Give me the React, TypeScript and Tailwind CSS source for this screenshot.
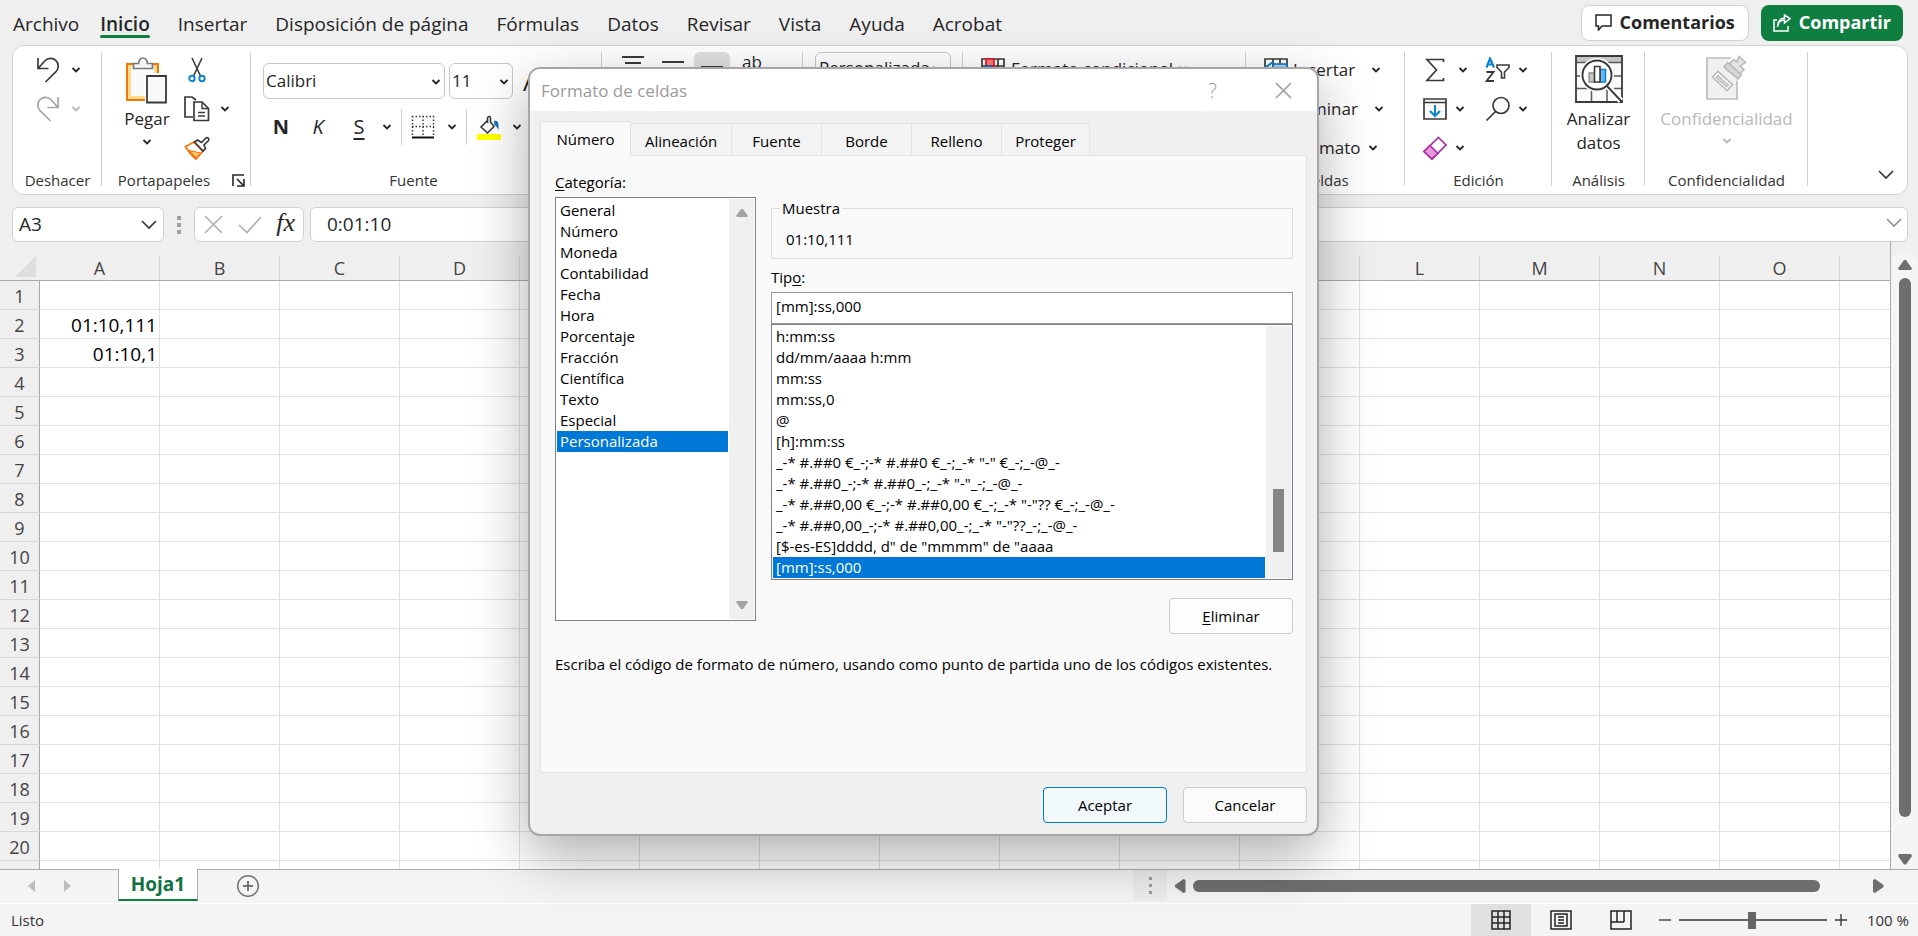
import type { ReactNode } from "react";

const MENU = [
  "Archivo",
  "Inicio",
  "Insertar",
  "Disposición de página",
  "Fórmulas",
  "Datos",
  "Revisar",
  "Vista",
  "Ayuda",
  "Acrobat",
];

const COLUMNS = ["A", "B", "C", "D", "E", "F", "G", "H", "I", "J", "K", "L", "M", "N", "O"];
const ROWS = Array.from({ length: 20 }, (_, i) => i + 1);
const CELLS: Record<string, string> = { A2: "01:10,111", A3: "01:10,1" };

const DIALOG_TABS = ["Alineación", "Fuente", "Borde", "Relleno", "Proteger"];

const CATEGORIES = [
  "General",
  "Número",
  "Moneda",
  "Contabilidad",
  "Fecha",
  "Hora",
  "Porcentaje",
  "Fracción",
  "Científica",
  "Texto",
  "Especial",
  "Personalizada",
];

const FORMATS = [
  "h:mm:ss",
  "dd/mm/aaaa h:mm",
  "mm:ss",
  "mm:ss,0",
  "@",
  "[h]:mm:ss",
  '_-* #.##0 €_-;-* #.##0 €_-;_-* "-" €_-;_-@_-',
  '_-* #.##0_-;-* #.##0_-;_-* "-"_-;_-@_-',
  '_-* #.##0,00 €_-;-* #.##0,00 €_-;_-* "-"?? €_-;_-@_-',
  '_-* #.##0,00_-;-* #.##0,00_-;_-* "-"??_-;_-@_-',
  '[$-es-ES]dddd, d" de "mmmm" de "aaaa',
  "[mm]:ss,000",
];

function Chevron({ className = "text-[#262626]" }: { className?: string }) {
  return (
    <svg className={`shrink-0 ${className}`} width="10" height="8" viewBox="0 0 10 8" fill="none" stroke="currentColor" strokeWidth="1.8">
      <path d="M1.500 2L5 5.500 8.500 2" />
    </svg>
  );
}

function WideChevron({ className = "text-[#333]" }: { className?: string }) {
  return (
    <svg className={`shrink-0 ${className}`} width="16" height="10" viewBox="0 0 16 10" fill="none" stroke="currentColor" strokeWidth="1.6">
      <path d="M1 1l7 7 7-7" />
    </svg>
  );
}

function UndoIcon() {
  return (
    <svg width="24" height="26" viewBox="0 0 24 26" fill="none" stroke="currentColor" strokeWidth="1.7">
      <path d="M2 1v10.500h10.500M2.500 11L9 3.800C12 .6 17 .6 20 3.600s3 8 0 11L9.500 25" />
    </svg>
  );
}

function RedoIcon() {
  return (
    <svg width="24" height="26" viewBox="0 0 24 26" fill="none" stroke="currentColor" strokeWidth="1.700">
      <path d="M22 1v10.500H11.500M21.500 11L15 3.800C12 .6 7 .6 4 3.600s-3 8 0 11L14.500 25" />
    </svg>
  );
}

function PasteIcon() {
  return (
    <svg width="42" height="48" viewBox="0 0 42 48" fill="none">
      <path d="M1 8h31v36H1z" fill="#ffd98a" stroke="#f7760a" strokeWidth="2" />
      <path d="M5 10h23v30H5z" fill="#fafafa" />
      <path d="M7.500 12.500V7.500h5C13 4 14.500 2 17 2s4 2 4.500 5.500h5v5z" fill="#f6f6f6" stroke="#7a7a7a" strokeWidth="1.700" />
      <path d="M19 17h22v30H19z" fill="#fff" />
      <path d="M21 20h19v26.500H21z" fill="#fafafa" stroke="#3b3a39" strokeWidth="1.800" />
    </svg>
  );
}

function CutIcon() {
  return (
    <svg width="18" height="26" viewBox="0 0 18 26" fill="none">
      <path d="M4 1l8.500 18M14 1L5.500 19" stroke="#3b3a39" strokeWidth="1.600" />
      <circle cx="4" cy="21.500" r="2.700" stroke="#0a84d0" strokeWidth="1.900" />
      <circle cx="14" cy="21.500" r="2.700" stroke="#0a84d0" strokeWidth="1.900" />
    </svg>
  );
}

function CopyIcon() {
  return (
    <svg width="26" height="26" viewBox="0 0 26 26" fill="#fff" stroke="#3b3a39" strokeWidth="1.700">
      <path d="M9 21H1V1h7l4 3" />
      <path d="M10 6h8l6.500 6.500V24.500H10z" />
      <path d="M18 6v6.500h6.500M14 16.500h7M14 20h7" fill="none" strokeWidth="1.400" />
    </svg>
  );
}

function BrushIcon() {
  return (
    <svg width="26" height="24" viewBox="0 0 26 24" fill="none">
      <path d="M10 6L1.500 10.500c3 5 6 9 10.500 12.500l7-8z" fill="#fff" stroke="#f7760a" strokeWidth="1.800" />
      <path d="M5 14.500l12 2.500-5 5.500z" fill="#ffc46b" stroke="#f7760a" strokeWidth="1.200" />
      <path d="M10.500 6l3-2 4 2.500L22 2c1.500-1 3.500.5 2.500 2.500L20 9l1.500 3.500-2.500 2.500z" fill="#fff" stroke="#3b3a39" strokeWidth="1.700" />
    </svg>
  );
}

function LauncherIcon() {
  return (
    <svg width="13" height="13" viewBox="0 0 13 13" fill="none" stroke="#262626" strokeWidth="1.600">
      <path d="M1 12V1h11M5 5l6 6M12 5v7H5" />
    </svg>
  );
}

function BordersIcon() {
  return (
    <svg width="24" height="24" viewBox="0 0 24 24" fill="none" stroke="#3b3a39">
      <path d="M1 1.500h22M1 11.500h22M1.500 1v20M12 1v20M22.500 1v20" strokeWidth="1.500" strokeDasharray="1.500 2" />
      <path d="M1 22.500h22" stroke="#111" strokeWidth="2" />
    </svg>
  );
}

function FillIcon() {
  return (
    <svg width="24" height="26" viewBox="0 0 24 26" fill="none">
      <path d="M17 7c4-1 5 2 4.500 9-1.500-3-2.500-4-4-5z" fill="#0a6fc2" />
      <path d="M10.500 6.500L4 13l6.500 6L17 12.500 13.500 8V4c0-2-2.500-2-3 0v5" fill="#fff" stroke="#3b3a39" strokeWidth="1.600" />
      <path d="M0 20h24v6H0z" fill="#ffff00" />
    </svg>
  );
}

function AlignLines({ offset }: { offset: number }) {
  return (
    <svg width="22" height="26" viewBox="0 0 22 26" fill="none" stroke="#3b3a39" strokeWidth="1.800">
      <path d={`M0 ${offset}h22M3 ${offset + 6}h16M0 ${offset + 12}h22`} />
    </svg>
  );
}

function CondFormatIcon() {
  return (
    <svg width="24" height="24" viewBox="0 0 24 24" fill="#fff" stroke="#3b3a39" strokeWidth="1.700">
      <path d="M1 1h22v22H1zM1 8h22M1 15h22M17 1v22" />
      <path d="M5 1h8v7H5z" fill="#ff7a70" stroke="#e81123" />
      <path d="M5 8h5v7H5z" fill="#4aa3e0" stroke="#0a6fc2" />
    </svg>
  );
}

function InsertCellsIcon() {
  return (
    <svg width="24" height="24" viewBox="0 0 24 24" fill="#fff" stroke="#3b3a39" strokeWidth="1.700">
      <path d="M1 1h22v22H1zM9 1v22M16 1v22M1 15h22" />
      <path d="M9 6h14v6H9z" fill="#9fd0f2" stroke="#0a6fc2" />
      <path d="M9 4L2 9l7 5" fill="none" stroke="#0a84d0" strokeWidth="2" />
    </svg>
  );
}

function SigmaIcon() {
  return (
    <svg width="20" height="24" viewBox="0 0 20 24" fill="none" stroke="#3b3a39" strokeWidth="1.700">
      <path d="M18.500 4V1.500H2L11.500 12 2 22.500h16.500V20" />
    </svg>
  );
}

function SortFilterIcon() {
  return (
    <svg width="26" height="26" viewBox="0 0 26 26" fill="none">
      <path d="M1.500 10.500L5 1.500l4 9M2.500 7.500h5.500" stroke="#0a84d0" strokeWidth="2.200" />
      <path d="M1.500 15h7l-7 9h7.500" stroke="#3b3a39" strokeWidth="1.900" />
      <path d="M12 8h12v2.500L19.500 15v6h-3v-6L12 10.500z" stroke="#3b3a39" strokeWidth="1.600" />
    </svg>
  );
}

function FillDownIcon() {
  return (
    <svg width="24" height="24" viewBox="0 0 24 24" fill="none" stroke="#3b3a39" strokeWidth="1.700">
      <path d="M1 2h22v20H1z" fill="#fafafa" />
      <path d="M1 5.500h22" />
      <path d="M12 8v11M7 14l5 5 5-5" stroke="#0a84d0" strokeWidth="2" />
    </svg>
  );
}

function FindIcon() {
  return (
    <svg width="26" height="26" viewBox="0 0 26 26" fill="none" stroke="#3b3a39" strokeWidth="1.700">
      <circle cx="16" cy="9.500" r="8" fill="#fcfcfc" />
      <path d="M10.500 15.500L1.500 24.500" />
    </svg>
  );
}

function EraserIcon() {
  return (
    <svg width="24" height="24" viewBox="0 0 24 24" fill="#fff" stroke="#b02fa8" strokeWidth="1.700">
      <path d="M15.500 1.500L23 9 9 23 1 15.500z" />
      <path d="M7 9.500l8 8L9 23 1 15.500z" fill="#e29ad9" />
    </svg>
  );
}

function AnalyzeIcon() {
  return (
    <svg width="48" height="48" viewBox="0 0 48 48" fill="none">
      <path d="M1 1h46v46H1z" fill="#fafafa" />
      <path d="M1 1h46v6H1z" fill="#c8c6c4" />
      <path d="M1 7.500h46M1 21h46M1 33.500h46M16.500 33.500v14M32 33.500v14" stroke="#5a5a5a" strokeWidth="1.500" />
      <path d="M1 1h46v46H1z" stroke="#3b3a39" strokeWidth="1.800" />
      <circle cx="22" cy="20" r="17" fill="#fff" />
      <path d="M31 29l15 17" stroke="#fff" strokeWidth="6" />
      <circle cx="22" cy="20" r="14.500" fill="#fff" stroke="#3b3a39" strokeWidth="1.900" />
      <path d="M32 31l15 16" stroke="#3b3a39" strokeWidth="1.900" />
      <path d="M14 18h6v9h-6z" fill="#c8c6c4" stroke="#8a8886" strokeWidth="1.300" />
      <path d="M25 14.500h5.500V27H25z" fill="#69b8f0" stroke="#0a84d0" strokeWidth="1.500" />
      <path d="M19.500 11.500H25V27h-5.500z" fill="#fff" stroke="#3b3a39" strokeWidth="1.600" />
    </svg>
  );
}

function SensitivityIcon() {
  return (
    <svg width="42" height="48" viewBox="0 0 42 48" fill="#f0f0f0" stroke="#bdbdbd" strokeWidth="1.700">
      <path d="M1 4h30v41H1z" />
      <path d="M18 9L31 0h11v20l-10 8z" fill="#fff" stroke="none" />
      <path d="M12 17.500l14.500 13-5.500 6L6.500 23z" fill="#fff" />
      <path d="M12 21.500l10.500 9.500-2 2L10 23.500z" fill="#d6d6d6" strokeWidth="1.200" />
      <path d="M18 13l14 12 3.500-4.500L21.500 8.500z" fill="#d6d6d6" />
      <path d="M23.500 9.500L28 5.500l3 2.500 2-5.500 6.500 6-5.500 3.500 4 3.500-4 4z" fill="#e4e4e4" />
    </svg>
  );
}

function Group({
  label,
  width,
  children,
  launcher,
  labelClass = "",
}: {
  label: string;
  width: string;
  children: ReactNode;
  launcher?: boolean;
  labelClass?: string;
}) {
  return (
    <section className={`flex shrink-0 flex-col ${width}`} aria-label={label}>
      <div className="relative flex h-[117px]">
        {children}
        <span className="absolute right-0 top-[2px] h-[134px] w-px bg-[#d1d1d1]" />
      </div>
      <div className={`flex h-[26px] items-center justify-center text-[15px] text-[#333] ${labelClass}`}>
        <span>{label}</span>
        {launcher && (
          <button aria-label="Más opciones" className="ml-[22px]">
            <LauncherIcon />
          </button>
        )}
      </div>
    </section>
  );
}

function Tool({ label, children, chevron, disabled }: { label: string; children: ReactNode; chevron?: string; disabled?: boolean }) {
  return (
    <button aria-label={label} disabled={disabled} className={`flex h-[39px] items-center ${disabled ? "text-[#a6a6a6]" : "text-[#3b3a39]"}`}>
      <span className="flex w-[26px] justify-center">{children}</span>
      {chevron && <Chevron className={chevron} />}
    </button>
  );
}

function Ribbon() {
  return (
    <div className="relative ml-3 mr-[10px] flex h-[150px] shrink-0 overflow-hidden rounded-xl border border-[#d1d1d1] bg-white pt-1 text-[17px] text-[#262626]">
      <Group label="Deshacer" width="w-[89px]">
        <div className="flex flex-col pl-[22px]">
          <Tool label="Deshacer" chevron="ml-[10px] text-[#262626]">
            <UndoIcon />
          </Tool>
          <Tool label="Rehacer" disabled chevron="ml-[10px] text-[#b5b5b5]">
            <RedoIcon />
          </Tool>
        </div>
      </Group>

      <Group label="Portapapeles" width="w-[149px]" launcher labelClass="pl-[10px]">
        <button className="ml-[22px] flex w-[46px] flex-col items-center pt-[6px]">
          <PasteIcon />
          <span className="mt-[3px] leading-6">Pegar</span>
          <Chevron className="mt-[7px] text-[#262626]" />
        </button>
        <div className="ml-[14px] flex flex-col">
          <Tool label="Cortar">
            <CutIcon />
          </Tool>
          <Tool label="Copiar" chevron="ml-[10px] text-[#262626]">
            <CopyIcon />
          </Tool>
          <Tool label="Copiar formato">
            <BrushIcon />
          </Tool>
        </div>
      </Group>

      <Group label="Fuente" width="w-[351px]" labelClass="pr-[26px]">
        <div className="flex flex-col pl-[12px] pt-[13px]">
          <div className="flex items-center gap-1">
            <div className="relative">
              <select aria-label="Fuente" className="h-9 w-[182px] appearance-none rounded-md border border-[#c8c8c8] bg-white pl-[2px]">
                <option>Calibri</option>
              </select>
              <Chevron className="pointer-events-none absolute right-[4px] top-[15px]" />
            </div>
            <div className="relative">
              <select aria-label="Tamaño de fuente" className="h-9 w-[64px] appearance-none rounded-md border border-[#c8c8c8] bg-white pl-[2px]">
                <option>11</option>
              </select>
              <Chevron className="pointer-events-none absolute right-[4px] top-[15px]" />
            </div>
            <button aria-label="Aumentar tamaño de fuente" className="pl-[6px] text-[26px] leading-8">
              A
            </button>
          </div>
          <div className="mt-[10px] flex h-[36px] items-center text-[20px]">
            <button className="w-[30px] pl-[6px] text-center font-bold">N</button>
            <button className="ml-[8px] w-[34px] text-center italic">K</button>
            <button className="ml-[8px] w-[32px] text-center underline underline-offset-4">S</button>
            <Chevron className="ml-[7px]" />
            <span className="ml-[9px] mr-[9px] h-9 w-px bg-[#d1d1d1]" />
            <button aria-label="Bordes">
              <BordersIcon />
            </button>
            <Chevron className="ml-[12px]" />
            <span className="ml-[9px] mr-[10px] h-9 w-px bg-[#d1d1d1]" />
            <button aria-label="Color de relleno">
              <FillIcon />
            </button>
            <Chevron className="ml-[11px]" />
          </div>
        </div>
      </Group>

      <Group label="Alineación" width="w-[201px]">
        <div className="flex pl-[20px] pt-[2px]">
          <button aria-label="Alinear arriba" className="flex h-9 w-[22px]">
            <AlignLines offset={5} />
          </button>
          <button aria-label="Alinear en el medio" className="ml-[18px] flex h-9 w-[22px]">
            <AlignLines offset={10} />
          </button>
          <button aria-label="Alinear abajo" className="ml-[10px] flex h-9 w-9 justify-center rounded-md bg-[#e0e0e0]">
            <AlignLines offset={15} />
          </button>
          <button aria-label="Ajustar texto" className="ml-[12px] flex h-9 leading-5">
            ab
          </button>
        </div>
      </Group>

      <Group label="Número" width="w-[160px]">
        <div className="relative pl-[12px] pt-[2px]">
          <select aria-label="Formato de número" className="h-9 w-[136px] appearance-none rounded-md border border-[#c8c8c8] bg-white pb-[4px] pl-[3px]">
            <option>Personalizada</option>
          </select>
          <Chevron className="pointer-events-none absolute right-[15px] top-[15px]" />
        </div>
      </Group>

      <Group label="Estilos" width="w-[283px]">
        <button className="flex h-[39px] items-center pl-[18px]">
          <CondFormatIcon />
          <span className="ml-[6px] mr-[5px] pb-[2px]">Formato condicional</span>
          <Chevron className="mb-[2px] text-[#262626]" />
        </button>
      </Group>

      <Group label="Celdas" width="w-[159px]">
        <div className="flex flex-col pl-[18px]">
          <button className="flex h-[39px] items-center">
            <InsertCellsIcon />
            <span className="w-[83px] pl-[5px] text-left">Insertar</span>
            <Chevron />
          </button>
          <button className="flex h-[39px] items-center">
            <InsertCellsIcon />
            <span className="w-[86px] pl-[5px] text-left">Eliminar</span>
            <Chevron />
          </button>
          <button className="flex h-[39px] items-center">
            <InsertCellsIcon />
            <span className="w-[80px] pl-[5px] text-left">Formato</span>
            <Chevron />
          </button>
        </div>
      </Group>

      <Group label="Edición" width="w-[147px]">
        <div className="flex flex-col pl-[17px]">
          <Tool label="Autosuma" chevron="ml-[10px] text-[#262626]">
            <SigmaIcon />
          </Tool>
          <Tool label="Rellenar" chevron="ml-[7px] text-[#262626]">
            <FillDownIcon />
          </Tool>
          <Tool label="Borrar" chevron="ml-[7px] text-[#262626]">
            <EraserIcon />
          </Tool>
        </div>
        <div className="ml-[17px] flex flex-col">
          <Tool label="Ordenar y filtrar" chevron="ml-[7px] text-[#262626]">
            <SortFilterIcon />
          </Tool>
          <Tool label="Buscar y seleccionar" chevron="ml-[7px] text-[#262626]">
            <FindIcon />
          </Tool>
        </div>
      </Group>

      <Group label="Análisis" width="w-[93px]">
        <button className="flex w-full flex-col items-center pt-[5px] leading-6">
          <AnalyzeIcon />
          <span className="mt-[4px] w-[70px]">Analizar datos</span>
        </button>
      </Group>

      <Group label="Confidencialidad" width="w-[163px]">
        <button disabled className="flex w-full flex-col items-center pt-[4px] leading-6 text-[#b8b8b8]">
          <SensitivityIcon />
          <span className="mt-[5px]">Confidencialidad</span>
          <Chevron className="mt-[6px]" />
        </button>
      </Group>

      <button aria-label="Contraer la cinta" className="ml-auto mr-[13px] self-end pb-[14px]">
        <WideChevron />
      </button>
    </div>
  );
}

function FormulaBar() {
  return (
    <div className="ml-3 mr-[10px] mt-3 flex h-[35px] shrink-0 items-stretch text-[19px] text-[#262626]">
      <div className="relative flex">
        <input aria-label="Cuadro de nombres" defaultValue="A3" className="w-[152px] rounded-md border border-[#d1d1d1] bg-white pl-[6px] outline-none" />
        <WideChevron className="pointer-events-none absolute right-[7px] top-[13px] text-[#333]" />
      </div>
      <div className="flex w-[30px] flex-col items-center justify-center gap-[3px]">
        <span className="h-1 w-1 bg-[#a0a0a0]" />
        <span className="h-1 w-1 bg-[#a0a0a0]" />
        <span className="h-1 w-1 bg-[#a0a0a0]" />
      </div>
      <div className="flex w-[110px] items-center justify-between rounded-md border border-[#d1d1d1] bg-white pl-[9px] pr-[8px]">
        <button aria-label="Cancelar entrada">
          <svg width="19" height="19" viewBox="0 0 19 19" fill="none" stroke="#b0b0b0" strokeWidth="1.700">
            <path d="M1 1l17 17M18 1L1 18" />
          </svg>
        </button>
        <button aria-label="Introducir">
          <svg width="24" height="18" viewBox="0 0 24 18" fill="none" stroke="#b0b0b0" strokeWidth="1.700">
            <path d="M1 9l8 7.500L23 1" />
          </svg>
        </button>
        <button aria-label="Insertar función" className="pb-[3px] font-['Liberation_Serif',serif] text-[26px] leading-7 italic">
          fx
        </button>
      </div>
      <div className="relative ml-[6px] flex flex-1">
        <input aria-label="Barra de fórmulas" defaultValue="0:01:10" className="w-full rounded-md border border-[#d1d1d1] bg-white pl-[16px] outline-none" />
        <WideChevron className="pointer-events-none absolute right-[6px] top-[11px] text-[#909090]" />
      </div>
    </div>
  );
}

function Grid() {
  return (
    <div className="flex min-h-0 flex-1">
      <div className="min-w-0 flex-1 overflow-hidden border-r border-[#ababab] bg-white">
        <table className="w-full table-fixed border-separate border-spacing-0">
          <colgroup>
            <col className="w-10" />
            {COLUMNS.map((c) => (
              <col key={c} className="w-[120px]" />
            ))}
            <col />
          </colgroup>
          <thead>
            <tr className="h-[39px] bg-[#efefef] text-[18px] text-[#444]">
              <th className="border-b border-[#ababab] p-0 align-bottom">
                <svg className="mb-[3px] ml-[15px]" width="21" height="21" viewBox="0 0 21 21" fill="#dedede">
                  <path d="M21 0v21H0z" />
                </svg>
              </th>
              {COLUMNS.map((c) => (
                <th key={c} scope="col" className="border-b border-[#ababab] p-0 align-bottom font-normal">
                  <div className="flex h-[24px] items-center justify-center border-r border-[#d6d6d6]">{c}</div>
                </th>
              ))}
              <th className="border-b border-[#ababab] p-0" />
            </tr>
          </thead>
          <tbody>
            {ROWS.map((r) => (
              <tr key={r} className="h-[29px]">
                <th scope="row" className="border-b border-r border-b-[#d6d6d6] border-r-[#ababab] bg-[#efefef] px-0 pt-[2px] pb-0 text-center text-[18px] leading-[26px] font-normal text-[#444]">
                  {r}
                </th>
                {COLUMNS.map((c) => (
                  <td key={c} className="border-b border-r border-[#e1e1e1] bg-white pt-[2px] pr-[2px] pb-0 pl-0 text-right text-[19px] leading-[26px] text-black">
                    {CELLS[`${c}${r}`]}
                  </td>
                ))}
                <td className="border-b border-[#e1e1e1] bg-white p-0" />
              </tr>
            ))}
            <tr className="h-[29px]">
              <th className="border-r border-[#ababab] bg-[#efefef] p-0" />
              {COLUMNS.map((c) => (
                <td key={c} className="border-r border-[#e1e1e1] p-0" />
              ))}
              <td className="p-0" />
            </tr>
          </tbody>
        </table>
      </div>
      <div className="mt-[10px] flex w-[27px] flex-col items-center rounded-t-xl bg-[#f5f5f5] pt-[7px] pb-[4px]">
        <svg width="14" height="11" viewBox="0 0 14 11" fill="#6e6e6e">
          <path d="M6 1h2l6 8.500-1 1.500H1L0 9.500z" />
        </svg>
        <div className="mt-[8px] mb-[37px] w-[12px] flex-1 rounded-full bg-[#6e6e6e]" />
        <svg width="14" height="11" viewBox="0 0 14 11" fill="#6e6e6e">
          <path d="M6 10.500h2L14 2l-1-2H1L0 2z" />
        </svg>
      </div>
    </div>
  );
}

function SheetBar() {
  return (
    <div className="flex h-[34px] shrink-0 border-t border-[#ababab] bg-[#f4f4f4] pb-[2px]">
      <div className="flex w-[118px] items-center pl-[28px]">
        <button aria-label="Hoja anterior">
          <svg width="7" height="12" viewBox="0 0 7 12" fill="#bdbdbd">
            <path d="M7 0v12L0 6z" />
          </svg>
        </button>
        <button aria-label="Hoja siguiente" className="ml-[29px]">
          <svg width="7" height="12" viewBox="0 0 7 12" fill="#bdbdbd">
            <path d="M0 0v12l7-6z" />
          </svg>
        </button>
      </div>
      <button className="-mt-px flex h-8 w-20 items-center justify-center border-x border-b-2 border-x-[#ababab] border-b-[#107c41] bg-white text-[19px] font-bold text-[#0e7242]">
        Hoja1
      </button>
      <button aria-label="Hoja nueva" className="ml-[38px]">
        <svg width="24" height="24" viewBox="0 0 24 24" fill="none" stroke="#757575">
          <circle cx="12" cy="12" r="10.300" strokeWidth="1.500" />
          <path d="M12 7v10M7 12h10" strokeWidth="2" />
        </svg>
      </button>
      <div className="ml-auto flex w-[34px] flex-col items-center justify-center gap-1 bg-[#ececec]">
        <span className="h-[3px] w-[3px] bg-[#9a9a9a]" />
        <span className="h-[3px] w-[3px] bg-[#9a9a9a]" />
        <span className="h-[3px] w-[3px] bg-[#9a9a9a]" />
      </div>
      <div className="mr-[26px] flex w-[calc(38%-4px)] items-center pl-[8px] pr-[8px]">
        <svg width="11" height="14" viewBox="0 0 11 14" fill="#6e6e6e">
          <path d="M0 6v2l8.500 6 2-1V1l-2-1z" />
        </svg>
        <div className="ml-[7px] mr-[53px] h-3 flex-1 rounded-full bg-[#6e6e6e]" />
        <svg width="11" height="14" viewBox="0 0 11 14" fill="#6e6e6e">
          <path d="M10.500 6v2L2 14l-2-1V1l2-1z" />
        </svg>
      </div>
    </div>
  );
}

function StatusBar() {
  return (
    <div className="flex h-[33px] shrink-0 items-stretch border-t border-white bg-[#f4f4f4] text-[15px] text-[#333]">
      <span className="self-center pl-[11px]">Listo</span>
      <div className="ml-auto flex">
        <button aria-label="Normal" className="flex w-[60px] items-center justify-center bg-[#e0e0e0]">
          <svg width="20" height="20" viewBox="0 0 20 20" fill="none" stroke="#222" strokeWidth="1.500">
            <path d="M1 1h18v18H1zM1 7h18M1 13h18M7 1v18M13 1v18" />
          </svg>
        </button>
        <button aria-label="Diseño de página" className="flex w-[60px] items-center justify-center">
          <svg width="22" height="20" viewBox="0 0 22 20" fill="none" stroke="#222" strokeWidth="1.500">
            <path d="M1 1h20v18H1zM5 4h12v12H5zM8 7h6M8 10h6M8 13h6" />
          </svg>
        </button>
        <button aria-label="Vista previa de salto de página" className="flex w-[60px] items-center justify-center">
          <svg width="22" height="20" viewBox="0 0 22 20" fill="none" stroke="#222" strokeWidth="1.500">
            <path d="M1 1h20v18H1zM1 12h13M7 1v11M14 1v11" />
          </svg>
        </button>
      </div>
      <button aria-label="Alejar" className="ml-[8px]">
        <svg width="12" height="12" viewBox="0 0 12 12" stroke="#333" strokeWidth="1.300">
          <path d="M0 6h12" />
        </svg>
      </button>
      <input
        type="range"
        aria-label="Zoom"
        min={10}
        max={190}
        defaultValue={99}
        className="mx-2 h-[18px] w-[148px] appearance-none self-center bg-[linear-gradient(#666,#666)] bg-[length:100%_2px] bg-center bg-no-repeat [&::-webkit-slider-thumb]:h-[17px] [&::-webkit-slider-thumb]:w-2 [&::-webkit-slider-thumb]:appearance-none [&::-webkit-slider-thumb]:bg-[#666]"
      />
      <button aria-label="Acercar">
        <svg width="12" height="12" viewBox="0 0 12 12" stroke="#333" strokeWidth="1.300">
          <path d="M0 6h12M6 0v12" />
        </svg>
      </button>
      <span className="ml-5 mr-[9px] self-center">100 %</span>
    </div>
  );
}

function FormatDialog() {
  return (
    <div
      role="dialog"
      aria-label="Formato de celdas"
      className="absolute left-[528px] top-[67px] w-[791px] overflow-hidden rounded-xl border-2 border-[#a6a6a6] bg-[#f0f0f0] text-[15px] leading-[21px] text-black shadow-[0_20px_56px_rgba(0,0,0,0.32)]"
    >
      <div className="flex h-[42px] items-center bg-white pl-[11px] pr-[25px] text-[17px] text-[#9b9b9b]">
        <h2>Formato de celdas</h2>
        <button aria-label="Ayuda" className="ml-auto text-[20px] font-light">
          ?
        </button>
        <button aria-label="Cerrar" className="ml-[58px]">
          <svg width="17" height="17" viewBox="0 0 17 17" fill="none" stroke="#9b9b9b" strokeWidth="1.500">
            <path d="M1 1l15 15M16 1L1 16" />
          </svg>
        </button>
      </div>

      <div className="px-[10px] pt-[10px] pb-[11px]">
        <div role="tablist" className="flex items-end">
          <button role="tab" aria-selected="true" className="-mb-px h-[35px] w-[91px] border border-b-0 border-[#e3e3e3] bg-[#f9f9f9] pt-px">
            Número
          </button>
          {DIALOG_TABS.map((t) => (
            <button
              key={t}
              role="tab"
              aria-selected="false"
              className={`h-8 border border-b-0 border-l-0 border-[#e3e3e3] bg-[#f3f3f3] pt-[4px] ${t === "Alineación" ? "w-[101px]" : t === "Proteger" ? "w-[88px]" : "w-[90px]"}`}
            >
              {t}
            </button>
          ))}
        </div>

        <div className="h-[618px] border border-[#e3e3e3] bg-[#f9f9f9] pr-[13px] pl-[14px] pt-[16px]">
          <div className="flex">
            <div className="w-[201px]">
              <p id="category-label">
                <u className="underline-offset-2">C</u>ategoría:
              </p>
              <div className="mt-[4px] flex h-[424px] border border-[#7a8290] bg-white p-px">
                <ul role="listbox" aria-labelledby="category-label" className="flex-1 pt-[1px] pr-px">
                  {CATEGORIES.map((c) => (
                    <li
                      key={c}
                      role="option"
                      aria-selected={c === "Personalizada"}
                      className={`pl-[3px] ${c === "Personalizada" ? "bg-[#0078d7] text-white" : ""}`}
                    >
                      {c}
                    </li>
                  ))}
                </ul>
                <div className="flex w-[25px] flex-col items-center justify-between bg-[#f0f0f0] py-[9px]">
                  <svg width="12" height="10" viewBox="0 0 12 10" fill="#a3a3a3">
                    <path d="M5 1h2l5 7-1 1H1L0 8z" />
                  </svg>
                  <svg width="12" height="10" viewBox="0 0 12 10" fill="#a3a3a3">
                    <path d="M5 9h2l5-7-1-1H1L0 2z" />
                  </svg>
                </div>
              </div>
            </div>

            <div className="ml-[15px] flex-1 pt-[26px]">
              <fieldset className="h-[61px] border border-[#dcdcdc] px-[8px]">
                <legend className="px-[2px] leading-5">Muestra</legend>
                <p className="pt-[11px] pl-[6px]">01:10,111</p>
              </fieldset>
              <label htmlFor="format-code" className="mt-[8px] block">
                Tip<u className="underline-offset-2">o</u>:
              </label>
              <input
                id="format-code"
                defaultValue="[mm]:ss,000"
                className="mt-[4px] block h-8 w-full border border-[#9a9a9a] bg-white px-1 pb-[4px] outline-none"
              />
              <div className="flex h-[256px] border border-[#7a8290] bg-white p-px">
                <ul role="listbox" aria-label="Códigos de formato" className="flex-1 pr-px">
                  {FORMATS.map((f, i) => (
                    <li
                      key={f}
                      role="option"
                      aria-selected={i === FORMATS.length - 1}
                      className={`pl-[3px] ${i === FORMATS.length - 1 ? "bg-[#0078d7] text-white" : ""}`}
                    >
                      {f}
                    </li>
                  ))}
                </ul>
                <div className="flex w-[25px] flex-col items-center bg-[#f0f0f0] pt-[163px]">
                  <span className="h-[63px] w-[11px] bg-[#858585]" />
                </div>
              </div>
              <div className="mt-[18px] flex justify-end">
                <button className="h-9 w-[124px] rounded border border-[#cccccc] bg-[#fdfdfd]">
                  <u className="underline-offset-2">E</u>liminar
                </button>
              </div>
            </div>
          </div>
          <p className="mt-[20px]">
            Escriba el código de formato de número, usando como punto de partida uno de los códigos existentes.
          </p>
        </div>

        <div className="mt-[14px] flex justify-end gap-[16px]">
          <button className="h-9 w-[124px] rounded border border-[#0078d4] bg-[#f1f9fd]">Aceptar</button>
          <button className="h-9 w-[124px] rounded border border-[#cccccc] bg-[#fbfbfb]">Cancelar</button>
        </div>
      </div>
    </div>
  );
}

export default function App() {
  return (
    <div className="relative flex h-screen flex-col overflow-hidden bg-[#efefef] font-['Open_Sans','Noto_Sans',sans-serif]">
      <header className="flex h-[45px] shrink-0 items-center pl-[13px] pr-[15px] text-[19px] text-[#262626]">
        <nav className="flex items-center gap-[28px] pt-[3px]">
          {MENU.map((m) =>
            m === "Inicio" ? (
              <a key={m} href="#inicio" className="relative -ml-[7px] font-semibold">
                {m}
                <span className="absolute inset-x-0 bottom-0 h-[3px] rounded bg-[#107c41]" />
              </a>
            ) : (
              <a key={m} href={`#${m}`}>
                {m}
              </a>
            ),
          )}
        </nav>
        <button className="ml-auto flex h-9 items-center gap-2 rounded-lg border border-[#d1d1d1] bg-white px-[13px] text-[18px] font-bold">
          <svg width="17" height="17" viewBox="0 0 17 17" fill="none" stroke="#262626" strokeWidth="1.500">
            <path d="M1 1h15v11H7l-3.500 4v-4H1z" />
          </svg>
          Comentarios
        </button>
        <button className="ml-3 flex h-9 items-center gap-2 rounded-lg bg-[#0f7f41] px-[12px] text-[18px] font-bold text-white">
          <svg width="18" height="18" viewBox="0 0 18 18" fill="none" stroke="#fff" strokeWidth="1.500">
            <path d="M4 6H1v11h14v-5M4.500 13C5 8 8 6 11.500 6V9L17 4.500 11.500 1v3C7 4 4.500 8 4.500 13z" />
          </svg>
          Compartir
        </button>
      </header>
      <Ribbon />
      <FormulaBar />
      <Grid />
      <SheetBar />
      <StatusBar />
      <FormatDialog />
    </div>
  );
}
